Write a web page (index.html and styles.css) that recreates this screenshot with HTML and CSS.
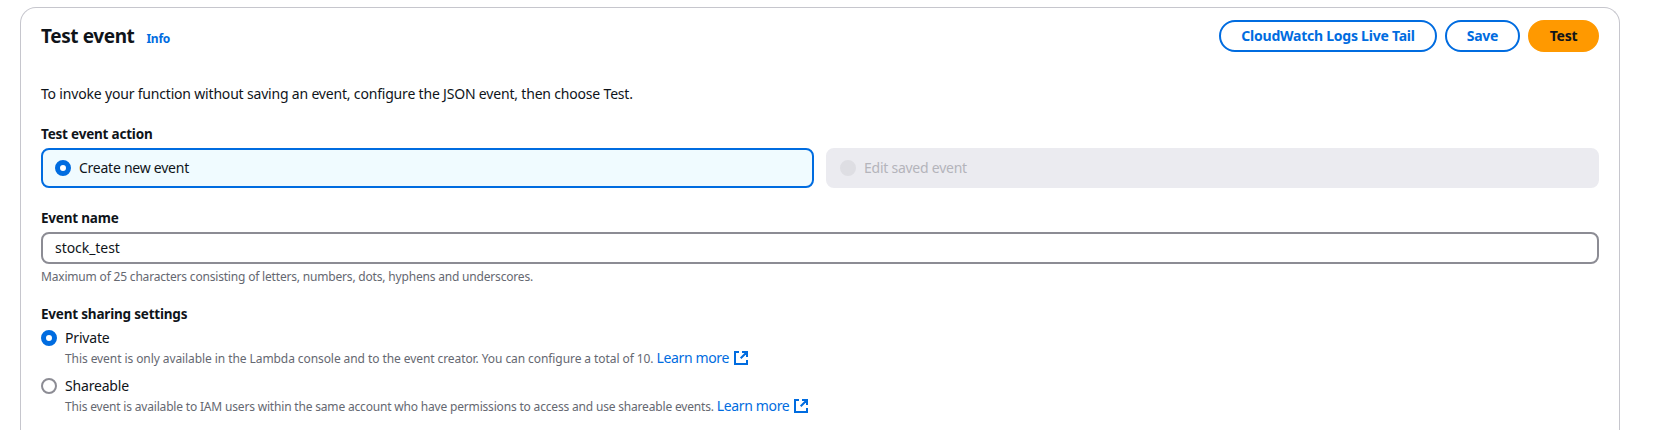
FILE: index.html
```html
<!DOCTYPE html>
<html lang="en">
<head>
<meta charset="utf-8">
<title>Test event</title>
<link rel="stylesheet" href="styles.css">
</head>
<body>
<svg class="defs" width="0" height="0" aria-hidden="true">
  <symbol id="external" viewBox="0 0 16 16">
    <path d="M6 2H2v12h12v-4M9 2h5v5M14 2 7.7 8.3" fill="none" stroke="currentColor" stroke-width="2"/>
  </symbol>
</svg>
<main class="panel">
  <header class="header">
    <div class="heading">
      <h2 class="title">Test event</h2>
      <a class="info">Info</a>
    </div>
    <div class="actions">
      <button class="btn btn-logs">CloudWatch Logs Live Tail</button>
      <button class="btn btn-save">Save</button>
      <button class="btn btn-primary">Test</button>
    </div>
  </header>

  <p class="intro">To invoke your function without saving an event, configure the JSON event, then choose Test.</p>

  <section class="field">
    <h3 class="label">Test event action</h3>
    <div class="tiles">
      <div class="tile tile-selected"><span class="radio radio-on"></span><span class="tile-text">Create new event</span></div>
      <div class="tile tile-disabled"><span class="radio radio-disabled"></span><span class="tile-text">Edit saved event</span></div>
    </div>
  </section>

  <section class="field">
    <h3 class="label">Event name</h3>
    <input class="input" type="text" value="stock_test">
    <p class="hint">Maximum of 25 characters consisting of letters, numbers, dots, hyphens and underscores.</p>
  </section>

  <section class="field">
    <h3 class="label">Event sharing settings</h3>
    <div class="options">
      <div class="option">
        <span class="radio radio-on"></span>
        <div class="option-body">
          <div class="option-name">Private</div>
          <div class="option-desc"><span class="desc desc-private">This event is only available in the Lambda console and to the event creator. You can configure a total of 10.</span><a class="link">Learn more<svg class="icon"><use href="#external"/></svg></a></div>
        </div>
      </div>
      <div class="option">
        <span class="radio"></span>
        <div class="option-body">
          <div class="option-name">Shareable</div>
          <div class="option-desc"><span class="desc desc-shareable">This event is available to IAM users within the same account who have permissions to access and use shareable events.</span><a class="link">Learn more<svg class="icon"><use href="#external"/></svg></a></div>
        </div>
      </div>
    </div>
  </section>
</main>
</body>
</html>
```
FILE: styles.css
```css
* { box-sizing: border-box; }

body {
  margin: 0;
  height: 430px;
  padding: 7px 0 0 20px;
  background: #fff;
  color: #0f141a;
  font: 14px/20px "Noto Sans", "Open Sans", sans-serif;
  letter-spacing: -0.185px;
}

h2, h3, p { margin: 0; }

.defs { position: absolute; }

.panel {
  width: 1600px;
  height: 423px;
  padding: 12px 20px 0;
  border: 1px solid #c6c6cd;
  border-bottom: 0;
  border-radius: 16px 16px 0 0;
}

.header {
  display: flex;
  justify-content: space-between;
  height: 32px;
}

.heading {
  display: flex;
  align-items: baseline;
  gap: 12px;
  padding-top: 4px;
}

.title {
  font-size: 19px;
  line-height: 24px;
  font-weight: 700;
  letter-spacing: -0.4px;
}

.info {
  color: #006ce0;
  font-size: 12px;
  line-height: 16px;
  font-weight: 700;
  letter-spacing: -0.25px;
}

.actions { display: flex; gap: 8px; }

.btn {
  height: 32px;
  padding: 0 0 1px;
  border: 2px solid #006ce0;
  border-radius: 20px;
  background: #fff;
  color: #006ce0;
  font: 700 14px/20px "Noto Sans", "Open Sans", sans-serif;
  letter-spacing: -0.24px;
}

.btn-logs { width: 218px; }
.btn-save { width: 75px; }

.btn-primary {
  width: 71px;
  border-color: #ff9900;
  background: #ff9900;
  color: #0f141a;
}

.intro { margin-top: 32px; }

.field { margin-top: 20px; }

.label {
  height: 24px;
  font-size: 13.5px;
  font-weight: 700;
  letter-spacing: -0.2px;
}

.tiles {
  display: grid;
  grid-template-columns: 1fr 1fr;
  gap: 12px;
}

.tile {
  display: flex;
  align-items: center;
  gap: 8px;
  height: 40px;
  padding: 0 12px;
  border: 2px solid #ebebf0;
  border-radius: 8px;
}

.tile-text { letter-spacing: -0.25px; }

.tile-selected { border-color: #006ce0; background: #f0fbff; }
.tile-disabled { background: #ebebf0; color: #b4b4bb; }

.radio {
  flex: none;
  width: 16px;
  height: 16px;
  border: 2px solid #8c8c94;
  border-radius: 50%;
  background: #fff;
}

.radio-on { border: 5px solid #006ce0; }
.radio-disabled { border-color: #dedee3; background: #dedee3; }

.input {
  display: block;
  width: 100%;
  height: 32px;
  padding: 0 12px 2px;
  border: 2px solid #8c8c94;
  border-radius: 8px;
  background: #fff;
  color: #0f141a;
  font: 14px/20px "Noto Sans", "Open Sans", sans-serif;
  letter-spacing: -0.05px;
}

.hint {
  height: 20px;
  padding-top: 5px;
  margin-bottom: 20px;
  color: #656871;
  font-size: 12px;
  line-height: 16px;
}

.options { display: grid; gap: 8px; }

.option { display: flex; gap: 8px; }

.option .radio { margin-top: 2px; }

.option-body { height: 40px; }

.option-desc {
  display: flex;
  align-items: baseline;
  gap: 3px;
  white-space: nowrap;
}

.desc {
  color: #656871;
  font-size: 12px;
}

.desc-private { letter-spacing: -0.08px; }
.desc-shareable { letter-spacing: -0.18px; }

.link { color: #006ce0; letter-spacing: -0.35px; }

.icon {
  width: 16px;
  height: 16px;
  margin-left: 4px;
  vertical-align: -3px;
}
```
